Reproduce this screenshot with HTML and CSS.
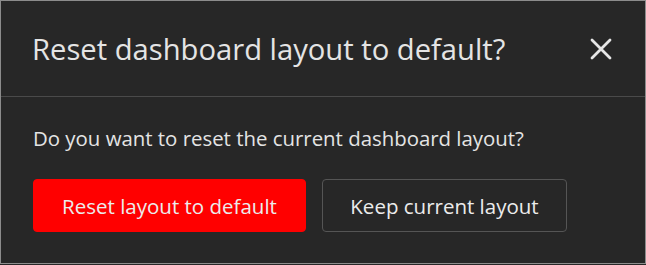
FILE: index.html
```html
<!DOCTYPE html>
<html>
<head>
<meta charset="utf-8">
<link rel="stylesheet" href="styles.css">
</head>
<body>
<div class="dialog">
  <div class="header">
    <h1 class="title">Reset dashboard layout to default?</h1>
    <button class="close" aria-label="Close">
      <svg width="22" height="22" viewBox="0 0 22 22"><path d="M2 2 L20 20 M20 2 L2 20" stroke="#e6e6e6" stroke-width="2.8" stroke-linecap="round"/></svg>
    </button>
  </div>
  <div class="body">
    <p class="message">Do you want to reset the current dashboard layout?</p>
    <div class="actions">
      <button class="btn btn-primary">Reset layout to default</button>
      <button class="btn btn-secondary">Keep current layout</button>
    </div>
  </div>
</div>
</body>
</html>
```
FILE: styles.css
```css
html, body {
  margin: 0;
  padding: 0;
  background: #272727;
}
.dialog {
  width: 646px;
  height: 264px;
  box-sizing: border-box;
  border: 1px solid #8c8c8c;
  background: #272727;
  font-family: "Open Sans", "Noto Sans", sans-serif;
  color: #e4e4e4;
}
.header {
  display: flex;
  align-items: center;
  justify-content: space-between;
  height: 96px;
  box-sizing: border-box;
  padding: 0 33px 0 31px;
  border-bottom: 1px solid #4a4a4a;
}
.title {
  margin: 0;
  font-size: 29.2px;
  font-weight: 400;
  color: #e4e4e4;
  line-height: 36px;
}
.close {
  background: none;
  border: 0;
  padding: 0;
  width: 22px;
  height: 22px;
  display: flex;
}
.body {
  padding: 27px 32px 0 32px;
}
.message {
  margin: 0;
  font-size: 20.4px;
  line-height: 28px;
  color: #e4e4e4;
}
.actions {
  display: flex;
  gap: 16px;
  margin-top: 27px;
}
.btn {
  height: 53px;
  box-sizing: border-box;
  border-radius: 4px;
  font-family: "Open Sans", "Noto Sans", sans-serif;
  font-size: 20.5px;
  color: #ececec;
  padding: 0;
}
.btn-primary {
  background: #ff0000;
  border: 1px solid #ff0000;
  width: 273px;
}
.btn-secondary {
  background: #272727;
  border: 1px solid #555;
  width: 245px;
}
```
